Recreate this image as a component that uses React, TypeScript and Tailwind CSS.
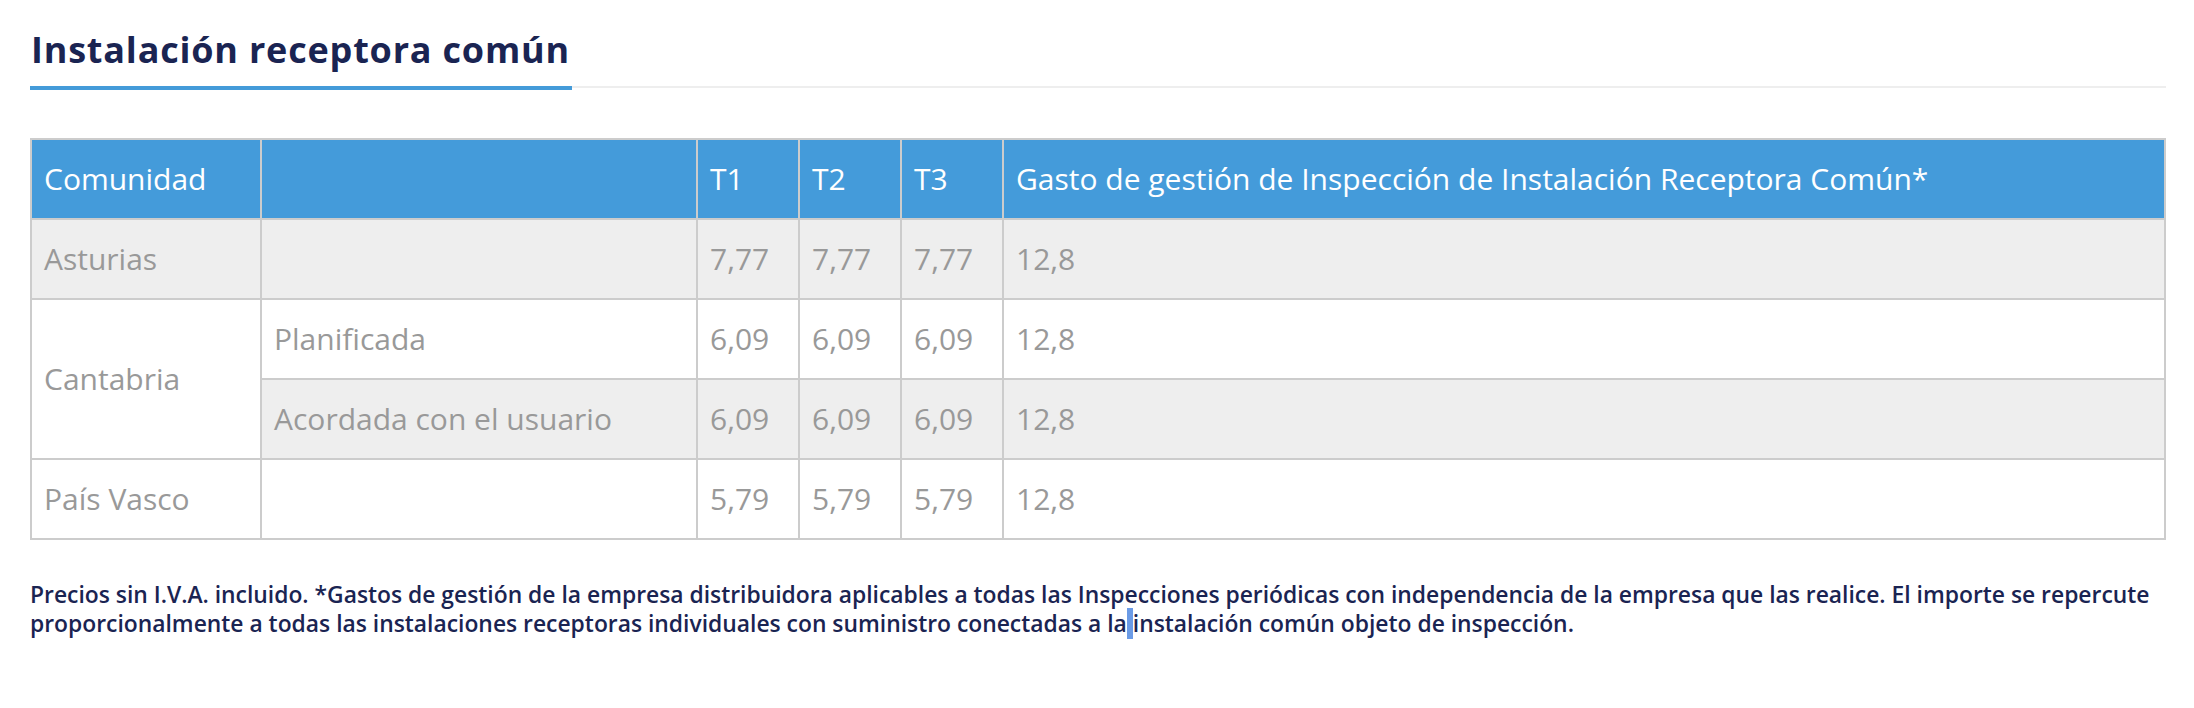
import React from "react";

type Row = {
  comunidad?: string;
  rowSpan?: number;
  modalidad: string;
  t1: string;
  t2: string;
  t3: string;
  gasto: string;
};

const rows: Row[] = [
  { comunidad: "Asturias", modalidad: "", t1: "7,77", t2: "7,77", t3: "7,77", gasto: "12,8" },
  { comunidad: "Cantabria", rowSpan: 2, modalidad: "Planificada", t1: "6,09", t2: "6,09", t3: "6,09", gasto: "12,8" },
  { modalidad: "Acordada con el usuario", t1: "6,09", t2: "6,09", t3: "6,09", gasto: "12,8" },
  { comunidad: "País Vasco", modalidad: "", t1: "5,79", t2: "5,79", t3: "5,79", gasto: "12,8" },
];

const th = "border-2 border-[#cccccc] px-3 py-[18px] leading-[42px] text-left font-normal";
const td = "border-2 border-[#cccccc] px-3 py-[18px] leading-[42px] align-middle";

export default function App() {
  return (
    <div className="min-h-screen bg-white pl-[30px] pr-[28px] pt-[28px] font-['Open_Sans',sans-serif]">
      <div className="border-b-2 border-[#eeeeee]">
        <h2 className="relative inline-block -mb-[4px] border-b-4 border-[#449bd9] pl-[1px] pr-[2px] pb-[14px] text-[36px] font-bold leading-[44px] tracking-[0.8px] text-[#1a2452]">
          Instalación receptora común
        </h2>
      </div>

      <table className="mt-[50px] w-full table-fixed border-collapse border-2 border-[#cccccc] text-[30px]">
        <colgroup>
          <col className="w-[230px]" />
          <col className="w-[436px]" />
          <col className="w-[102px]" />
          <col className="w-[102px]" />
          <col className="w-[102px]" />
          <col />
        </colgroup>
        <thead>
          <tr className="bg-[#449bda] text-white">
            <th className={th}>Comunidad</th>
            <th className={th}></th>
            <th className={th}>T1</th>
            <th className={th}>T2</th>
            <th className={th}>T3</th>
            <th className={th}>Gasto de gestión de Inspección de Instalación Receptora Común*</th>
          </tr>
        </thead>
        <tbody className="font-normal text-[#999999]">
          {rows.map((r, i) => (
            <tr key={i} className={i % 2 === 0 ? "bg-[#eeeeee]" : "bg-white"}>
              {r.comunidad && (
                <td rowSpan={r.rowSpan} className={`${td} ${i === 0 ? "bg-[#eeeeee]" : "bg-white"}`}>
                  {r.comunidad}
                </td>
              )}
              <td className={td}>{r.modalidad}</td>
              <td className={td}>{r.t1}</td>
              <td className={td}>{r.t2}</td>
              <td className={td}>{r.t3}</td>
              <td className={td}>{r.gasto}</td>
            </tr>
          ))}
        </tbody>
      </table>

      <p className="mt-[40px] text-[22.85px] font-semibold leading-[29px] text-[#1a2452]">
        Precios sin I.V.A. incluido. *Gastos de gestión de la empresa distribuidora aplicables a todas las
        Inspecciones periódicas con independencia de la empresa que las realice. El importe se repercute
        proporcionalmente a todas las instalaciones receptoras individuales con suministro conectadas a la
        <span className="bg-[#6b9be6]"> </span>
        instalación común objeto de inspección.
      </p>
    </div>
  );
}
